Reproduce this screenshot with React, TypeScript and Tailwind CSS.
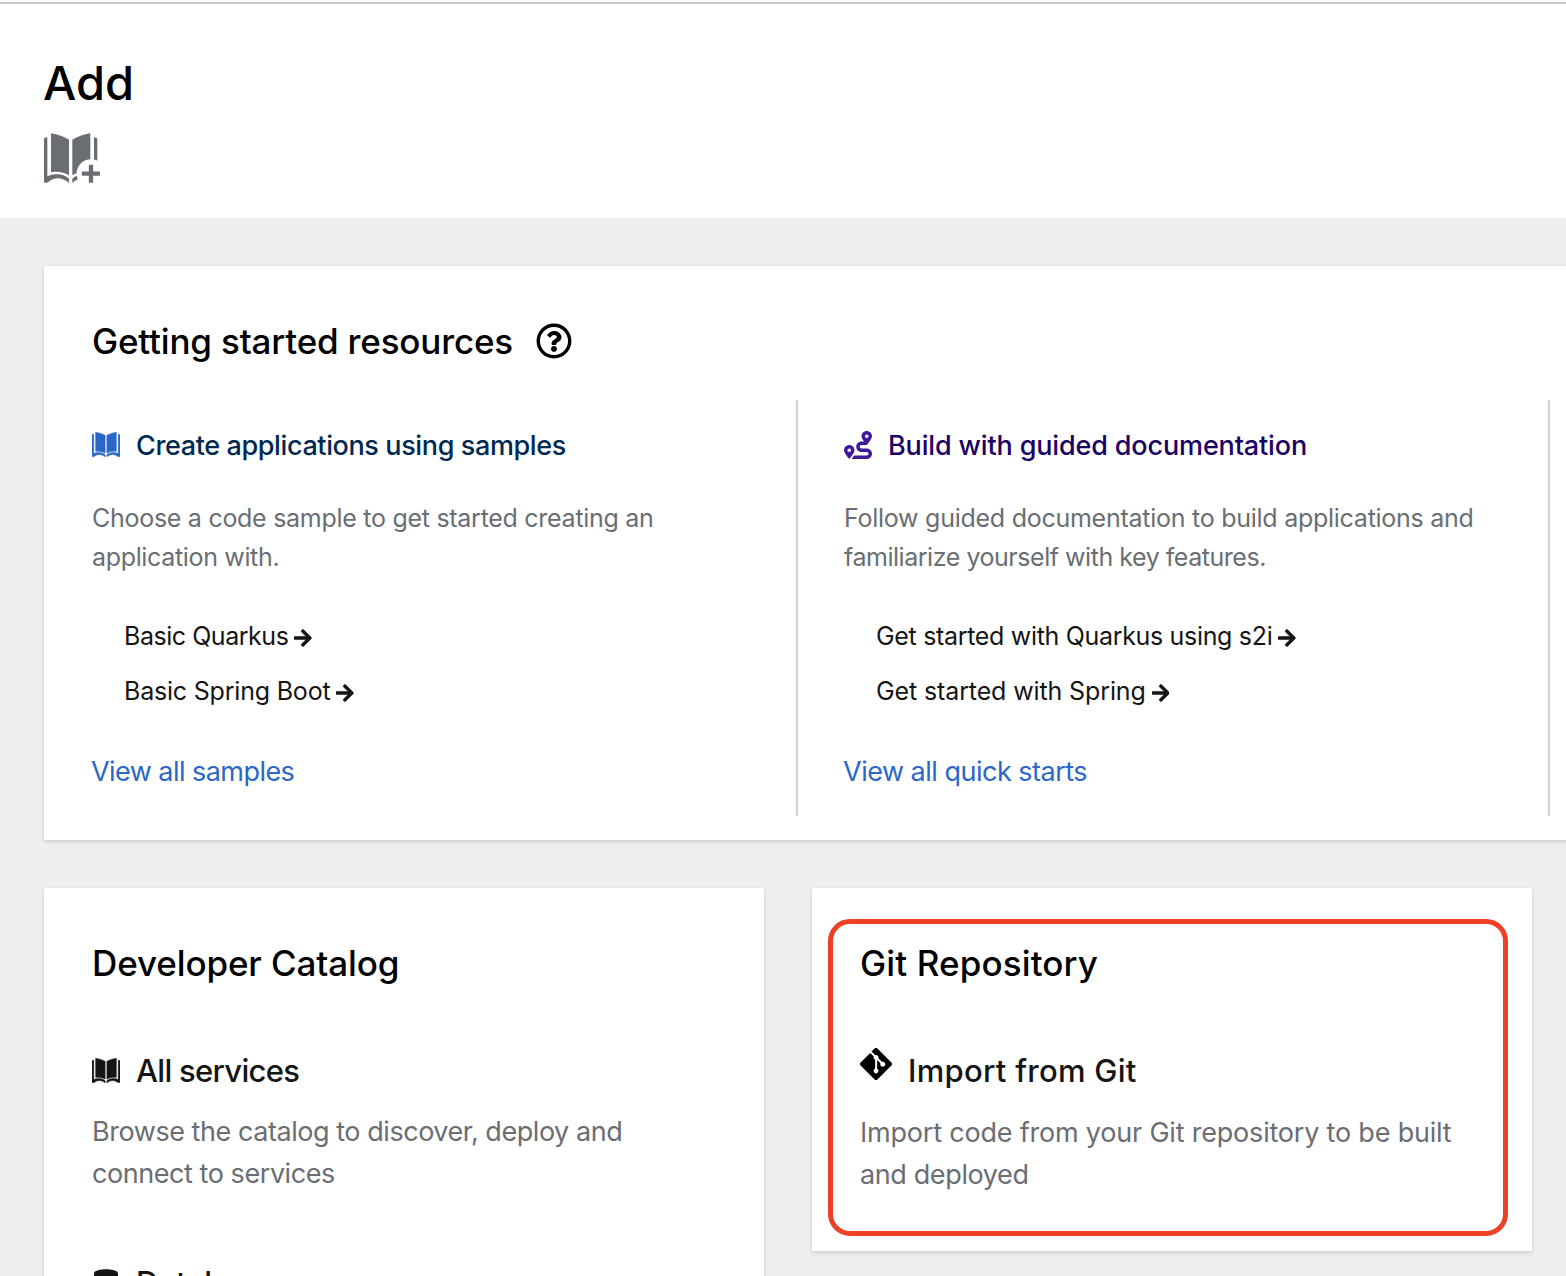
import React from "react";
import { FaArrowRight, FaDatabase, FaGitAlt, FaRegQuestionCircle, FaRoute } from "react-icons/fa";

const LEFT_HALF =
  "M0 19Q0 13 10 13V130Q26 122 44 124Q64 126 75 137V150Q58 136 42 136Q26 136 12 148Q0 153 0 145Z M21 1Q52 6 75 20V127Q54 113 21 117Z";
const RIGHT_HALF =
  "M160 19Q160 13 150 13V130Q134 122 116 124Q96 126 85 137V150Q102 136 118 136Q134 136 148 148Q160 153 160 145Z M139 1Q108 6 85 20V127Q106 113 139 117Z";

function BookIcon({ className }: { className: string }) {
  return (
    <svg
      viewBox="0 0 160 151"
      preserveAspectRatio="none"
      className={className}
      fill="currentColor"
      stroke="currentColor"
      strokeWidth="3"
      aria-hidden="true"
    >
      <path d={LEFT_HALF} />
      <path d={RIGHT_HALF} />
    </svg>
  );
}

function BookPlusIcon({ className }: { className: string }) {
  return (
    <svg viewBox="0 0 169 151" className={className} aria-hidden="true">
      <g fill="currentColor">
        <path d={LEFT_HALF} />
        <path d={RIGHT_HALF} />
      </g>
      <circle cx="141" cy="122" r="43" fill="white" />
      <path d="M102 140V151H169V84H150V130Z" fill="white" />
      <path
        d="M134.500 97q0-2 2-2h9q2 0 2 2v18.500h19q2 0 2 2v9q0 2-2 2h-19v18.500q0 2-2 2h-9q-2 0-2-2v-18.500h-19q-2 0-2-2v-9q0-2 2-2h19z"
        fill="currentColor"
      />
    </svg>
  );
}

function SampleLink({ text, spacing }: { text: string; spacing: string }) {
  return (
    <a className="flex h-[39px] items-center text-[25px] leading-[39px] text-[#151515]">
      <span className={spacing}>{text}</span>
      <FaArrowRight className="relative top-[1.5px] ml-[6px] h-5 w-[17.5px] shrink-0 stroke-current [stroke-width:14]" />
    </a>
  );
}

export default function App() {
  return (
    <div className="h-[1276px] w-[1566px] overflow-hidden bg-[#efefef] font-['Inter',sans-serif] whitespace-nowrap">
      <header className="h-[218px] bg-white pt-[2px]">
        <div className="h-[2px] bg-[#c9c9c9]" />
        <div className="pt-[49px] pl-11">
          <h1 className="-ml-px h-[60px] text-[47px] leading-[60px] font-medium text-black">Add</h1>
          <BookPlusIcon className="mt-5 h-[50.3px] w-[56.3px] text-[#6a6e73]" />
        </div>
      </header>

      <section className="mt-12 ml-11 h-[574px] w-[1600px] bg-white pt-12 shadow-[0_2px_4px_rgba(3,3,3,0.12),0_0_4px_rgba(3,3,3,0.06)]">
        <div className="flex h-[54px] items-center pl-12">
          <h2 className="w-[444px] text-[35px] leading-[54px] font-medium tracking-[-0.18px] text-black">
            Getting started resources
          </h2>
          <FaRegQuestionCircle className="size-9 text-black" />
        </div>
        <div className="mt-8 flex h-[416px] pl-12">
          <div className="w-[706px] border-r-2 border-[#d2d2d2] pt-[25px]">
            <h3 className="flex h-[42px] items-center text-[27px] leading-[42px] font-medium tracking-[-0.38px] text-[#002952]">
              <BookIcon className="relative -top-[1.5px] mr-4 h-[25px] w-7 text-[#2b66c9]" />
              Create applications using samples
            </h3>
            <div className="mt-8 text-[25px] leading-[39px] text-[#6a6e73]">
              <p className="tracking-[-0.28px]">Choose a code sample to get started creating an</p>
              <p className="tracking-[-0.34px]">application with.</p>
            </div>
            <div className="mt-10 flex flex-col gap-4 pl-8">
              <SampleLink text="Basic Quarkus" spacing="tracking-[-0.46px]" />
              <SampleLink text="Basic Spring Boot" spacing="tracking-[-0.2px]" />
            </div>
            <a className="mt-10 -ml-px block text-[27px] leading-[42px] tracking-[-0.55px] text-[#2b66c9]">
              View all samples
            </a>
          </div>
          <div className="w-[752px] border-r-2 border-[#d2d2d2] pt-[25px] pl-[46px]">
            <h3 className="flex h-[42px] items-center text-[27px] leading-[42px] font-medium tracking-[-0.15px] text-[#1b0066]">
              <FaRoute className="relative -top-px mr-4 size-7 text-[#40199a]" />
              Build with guided documentation
            </h3>
            <div className="mt-8 text-[25px] leading-[39px] text-[#6a6e73]">
              <p className="tracking-[-0.26px]">Follow guided documentation to build applications and</p>
              <p className="tracking-[-0.46px]">familiarize yourself with key features.</p>
            </div>
            <div className="mt-10 flex flex-col gap-4 pl-8">
              <SampleLink text="Get started with Quarkus using s2i" spacing="tracking-[-0.32px]" />
              <SampleLink text="Get started with Spring" spacing="tracking-[-0.12px]" />
            </div>
            <a className="mt-10 -ml-px block text-[27px] leading-[42px] tracking-[-0.5px] text-[#2b66c9]">
              View all quick starts
            </a>
          </div>
        </div>
      </section>

      <div className="mt-12 ml-11 flex items-start gap-12">
        <section className="h-[500px] w-[720px] bg-white px-12 pt-12 shadow-[0_2px_4px_rgba(3,3,3,0.12),0_0_4px_rgba(3,3,3,0.06)]">
          <h2 className="text-[35px] leading-[54px] font-medium tracking-[-0.12px] text-black">Developer Catalog</h2>
          <h3 className="mt-[57px] flex h-12 items-center text-[31px] leading-[48px] font-medium tracking-[-0.7px] text-[#151515]">
            <BookIcon className="relative -top-px mr-4 h-[25px] w-7" />
            All services
          </h3>
          <div className="mt-4 text-[27px] leading-[42px] text-[#6a6e73]">
            <p className="tracking-[-0.45px]">Browse the catalog to discover, deploy and</p>
            <p className="tracking-[-0.44px]">connect to services</p>
          </div>
          <h3 className="mt-16 flex h-12 items-center text-[31px] leading-[48px] font-medium text-[#151515]">
            <FaDatabase className="mr-[18px] ml-[2px] h-7 w-6" />
            Database
          </h3>
        </section>

        <section className="relative h-[363px] w-[720px] bg-white px-12 pt-12 shadow-[0_2px_4px_rgba(3,3,3,0.12),0_0_4px_rgba(3,3,3,0.06)]">
          <h2 className="text-[35px] leading-[54px] font-medium tracking-[0.12px] text-black">Git Repository</h2>
          <h3 className="mt-[57px] flex h-12 items-start text-[31px] leading-[48px] font-medium tracking-[0.28px] text-[#151515]">
            <FaGitAlt className="mt-px mr-4 size-8 text-black" viewBox="0 32 448 448" preserveAspectRatio="none" />
            Import from Git
          </h3>
          <div className="mt-[17px] text-[27px] leading-[42px] text-[#6a6e73]">
            <p className="tracking-[-0.2px]">Import code from your Git repository to be built</p>
            <p className="tracking-[-0.38px]">and deployed</p>
          </div>
          <div className="absolute top-[31px] left-4 h-[317px] w-[680px] rounded-[22px] border-[5px] border-[#ee4027]" />
        </section>
      </div>
    </div>
  );
}
